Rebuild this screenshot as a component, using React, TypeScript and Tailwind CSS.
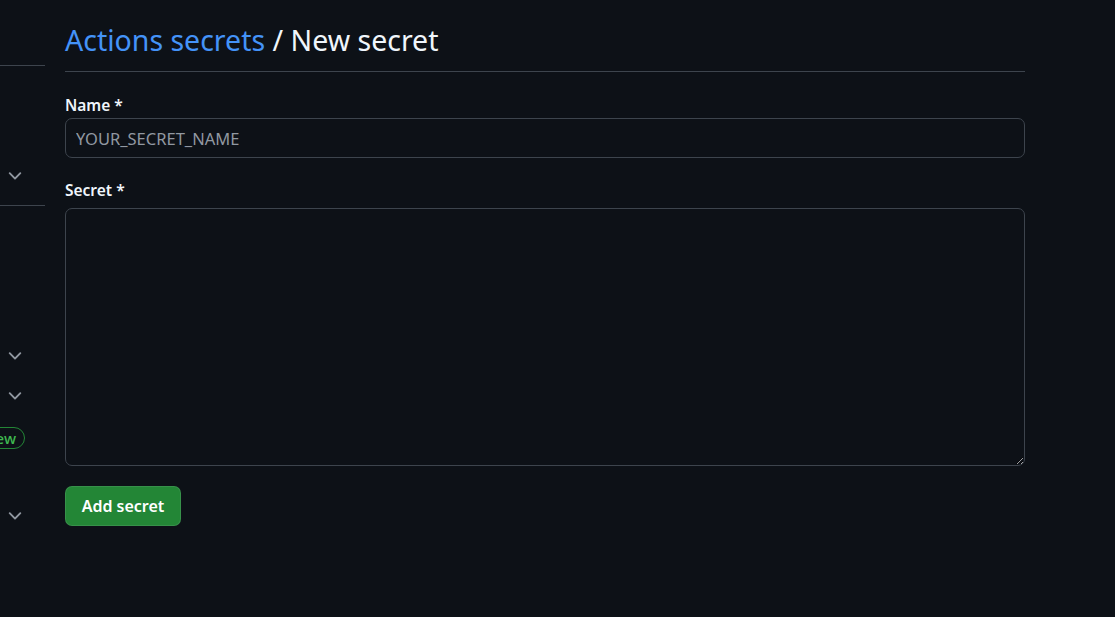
const Chevron = () => (
  <svg width="20" height="20" viewBox="0 0 16 16" fill="#9198a1">
    <path d="M12.78 5.22a.749.749 0 0 1 0 1.06l-4.25 4.25a.749.749 0 0 1-1.06 0L3.22 6.28a.749.749 0 1 1 1.06-1.06L8 8.939l3.72-3.719a.749.749 0 0 1 1.06 0Z" />
  </svg>
);

const Sidebar = () => (
  <aside className="w-[45px] shrink-0 overflow-hidden">
    <div className="h-[65px]" />
    <div className="h-px bg-[#3d444d]" />
    <div className="h-[90px]" />
    <div className="h-[40px] flex items-center justify-end pr-[20px]">
      <Chevron />
    </div>
    <div className="h-[9px]" />
    <div className="h-px bg-[#3d444d]" />
    <div className="h-[130px]" />
    <div className="h-[40px] flex items-center justify-end pr-[20px]">
      <Chevron />
    </div>
    <div className="h-[40px] flex items-center justify-end pr-[20px]">
      <Chevron />
    </div>
    {/* badge is clipped by the viewport on the left, like the reference */}
    <div className="h-[44px] flex items-center justify-end pr-[20px]">
      <span className="shrink-0 rounded-full border border-[#238636] text-[#3fb950] text-[15px] leading-[20px] px-[8px] font-medium">
        New
      </span>
    </div>
    <div className="h-[36px]" />
    <div className="h-[40px] flex items-center justify-end pr-[20px]">
      <Chevron />
    </div>
  </aside>
);

export default function App() {
  return (
    <div
      className="min-h-screen w-full bg-[#0d1117] text-[#f0f6fc] flex gap-[20px]"
      style={{ fontFamily: '"Noto Sans", "Open Sans", sans-serif' }}
    >
      <Sidebar />
      <main className="w-[960px] shrink-0">
        <div className="pt-[19px] pb-[10px] border-b border-[#3d444d]">
          <h1 className="text-[28.5px] leading-[42px] font-normal">
            <a className="text-[#4493f8]">Actions secrets</a>
            <span> / New secret</span>
          </h1>
        </div>

        <form className="flex flex-col">
          <label className="mt-[21px] mb-[1px] text-[15.5px] leading-[24px] font-semibold">Name *</label>
          <input
            className="h-[40px] w-full rounded-[7px] border border-[#3d444d] bg-[#0d1117] px-[10px] text-[16.5px] text-[#f0f6fc] placeholder:text-[#9198a1] outline-none"
            placeholder="YOUR_SECRET_NAME"
          />
          <label className="mt-[20px] mb-[6px] text-[15.5px] leading-[24px] font-semibold">Secret *</label>
          <textarea className="h-[258px] w-full rounded-[7px] border border-[#3d444d] bg-[#0d1117] px-[10px] py-[6px] text-[16px] outline-none" />
          <div className="mt-[20px]">
            <button
              type="button"
              className="h-[40px] w-[116px] rounded-[7px] border border-[#f0f6fc1a] bg-[#238636] text-[16px] font-semibold text-white"
            >
              Add secret
            </button>
          </div>
        </form>
      </main>
    </div>
  );
}
